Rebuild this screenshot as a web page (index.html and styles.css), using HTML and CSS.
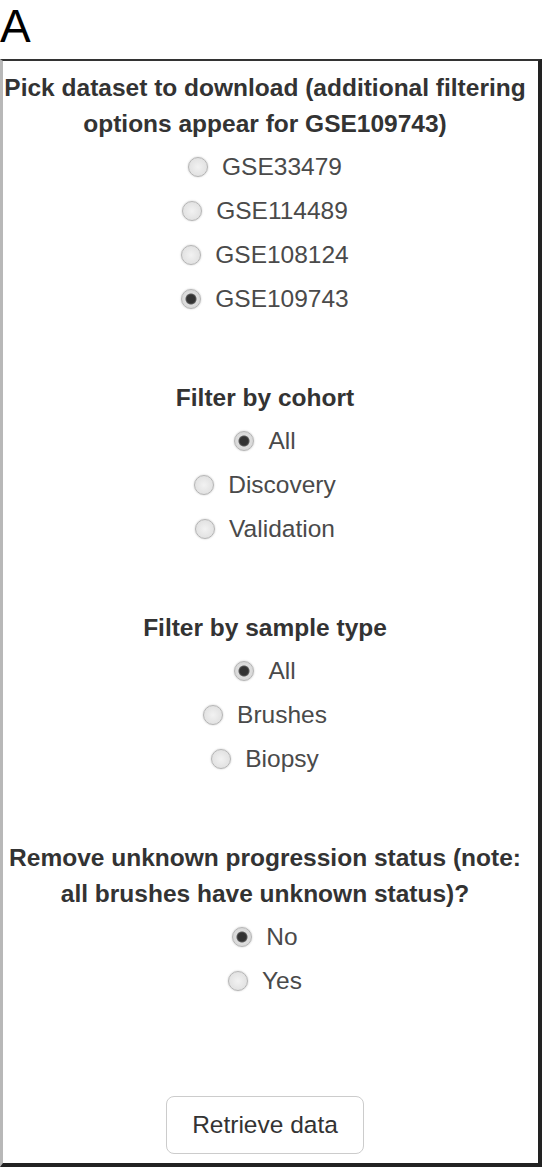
FILE: index.html
```html
<!DOCTYPE html>
<html lang="en">
<head>
    <meta charset="UTF-8">
    <meta name="viewport" content="width=device-width, initial-scale=1.0">
    <title>Download Data</title>
    <link rel="stylesheet" href="styles.css">
</head>
<body>
    <div class="panel-label">A</div>
    <div class="download-panel">
        <div class="field-group">
            <h4>Pick dataset to download (additional filtering options appear for GSE109743)</h4>
            <div class="radio-list">
                <label class="radio"><input type="radio" name="dataset" value="GSE33479"><span>GSE33479</span></label>
                <label class="radio"><input type="radio" name="dataset" value="GSE114489"><span>GSE114489</span></label>
                <label class="radio"><input type="radio" name="dataset" value="GSE108124"><span>GSE108124</span></label>
                <label class="radio"><input type="radio" name="dataset" value="GSE109743" checked><span>GSE109743</span></label>
            </div>
        </div>

        <div class="field-group">
            <h4>Filter by cohort</h4>
            <div class="radio-list">
                <label class="radio"><input type="radio" name="cohort" value="all" checked><span>All</span></label>
                <label class="radio"><input type="radio" name="cohort" value="discovery"><span>Discovery</span></label>
                <label class="radio"><input type="radio" name="cohort" value="validation"><span>Validation</span></label>
            </div>
        </div>

        <div class="field-group">
            <h4>Filter by sample type</h4>
            <div class="radio-list">
                <label class="radio"><input type="radio" name="sample" value="all" checked><span>All</span></label>
                <label class="radio"><input type="radio" name="sample" value="brushes"><span>Brushes</span></label>
                <label class="radio"><input type="radio" name="sample" value="biopsy"><span>Biopsy</span></label>
            </div>
        </div>

        <div class="field-group">
            <h4>Remove unknown progression status (note: all brushes have unknown status)?</h4>
            <div class="radio-list">
                <label class="radio"><input type="radio" name="unknown" value="no" checked><span>No</span></label>
                <label class="radio"><input type="radio" name="unknown" value="yes"><span>Yes</span></label>
            </div>
        </div>

        <div class="actions">
            <button type="button" class="retrieve-btn">Retrieve data</button>
        </div>
    </div>
</body>
</html>
```

FILE: styles.css
```css
body {
    font-family: "Liberation Sans", Arial, sans-serif;
    background-color: #ffffff;
    margin: 0;
    padding: 0;
}

.panel-label {
    font-size: 46px;
    line-height: 52px;
    color: #000;
    margin-bottom: 7px;
}

.download-panel {
    height: 1108px;
    box-sizing: border-box;
    border-top: 2px solid #333;
    border-left: 3px solid #b8b8b8;
    border-right: 4px solid #222;
    border-bottom: 4px solid #222;
    padding: 9px 11px 0 0;
    text-align: center;
    display: flex;
    flex-direction: column;
}

.field-group {
    margin-bottom: 59px;
}

.field-group h4 {
    margin: 0 0 3px 0;
    font-size: 24.5px;
    line-height: 36px;
    font-weight: bold;
    color: #333;
}

.radio-list {
    display: flex;
    flex-direction: column;
    align-items: center;
}

.radio {
    display: inline-flex;
    align-items: center;
    height: 44px;
    font-size: 24.5px;
    color: #4a4a4a;
    cursor: pointer;
}

.radio input {
    appearance: none;
    -webkit-appearance: none;
    width: 20px;
    height: 20px;
    margin: 0 14px 0 0;
    border: 1px solid #b5b5b5;
    border-radius: 50%;
    background: radial-gradient(circle, #f2f2f2 0%, #e2e2e2 70%, #d4d4d4 100%);
    box-shadow: 0 0 2px rgba(0, 0, 0, 0.25);
    box-sizing: border-box;
}

.radio input:checked {
    background: radial-gradient(circle, #333 0, #333 4px, #5a5a5a 5px, #dedede 6px, #d0d0d0 100%);
}

.actions {
    margin-top: 34px;
}

.retrieve-btn {
    font-family: "Liberation Sans", Arial, sans-serif;
    font-size: 24.5px;
    line-height: 36px;
    color: #333;
    background-color: #fff;
    border: 1px solid #ccc;
    border-radius: 8px;
    padding: 10px 25px;
    cursor: pointer;
}

.retrieve-btn:hover {
    background-color: #e6e6e6;
}
```
